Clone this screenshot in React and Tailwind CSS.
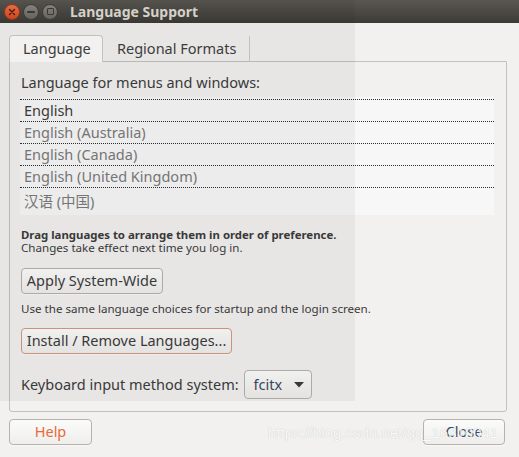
import React from "react";

const langs = [
  { name: "English", dark: true },
  { name: "English (Australia)" },
  { name: "English (Canada)" },
  { name: "English (United Kingdom)" },
];

function Btn({ children, className = "", textClass = "" }) {
  return (
    <div
      className={
        "flex items-center justify-center h-[26px] rounded-[4px] border bg-gradient-to-b from-[#fbfbfa] to-[#efeeec] shadow-[0_1px_0_rgba(255,255,255,0.6)] " +
        className
      }
    >
      <span className={"text-[14.5px] " + textClass}>{children}</span>
    </div>
  );
}

export default function App() {
  return (
    <div
      className="relative w-[519px] h-[457px] overflow-hidden bg-[#f2f1f0] text-[#3c3c3c]"
      style={{ fontFamily: '"Noto Sans", "Noto Sans CJK SC", sans-serif' }}
    >
      {/* Title bar */}
      <div className="h-[23px] flex items-center bg-gradient-to-b from-[#5a5751] to-[#3c3b37]">
        <div className="flex items-center gap-[3px] pl-[4px]">
          <div className="w-[16px] h-[16px] rounded-full bg-gradient-to-b from-[#f0734a] to-[#d9481f] border border-[#a83a1a] flex items-center justify-center">
            <svg width="8" height="8" viewBox="0 0 8 8">
              <path d="M1.5 1.5 L6.5 6.5 M6.5 1.5 L1.5 6.5" stroke="#4a1a0c" strokeWidth="1.3" strokeLinecap="round" />
            </svg>
          </div>
          <div className="w-[16px] h-[16px] rounded-full bg-gradient-to-b from-[#8a8782] to-[#6b6964] border border-[#403f3b] flex items-center justify-center">
            <div className="w-[8px] h-[2px] bg-[#3c3b37] rounded-sm" />
          </div>
          <div className="w-[16px] h-[16px] rounded-full bg-gradient-to-b from-[#8a8782] to-[#6b6964] border border-[#403f3b] flex items-center justify-center">
            <div className="w-[7px] h-[7px] border-[1.5px] border-[#3c3b37] rounded-[1px]" />
          </div>
        </div>
        <div className="ml-[12px] text-[14px] font-bold text-[#dfdbd2] leading-none">Language Support</div>
      </div>

      {/* Notebook */}
      <div className="px-[9px] pt-[12px] w-[507px] box-content">
        <div className="flex items-end h-[27px] relative z-10">
          <div className="h-[27px] w-[94px] border border-b-0 border-[#c3c1bd] rounded-t-[4px] bg-[#f2f1f0] flex items-center pl-[13px] text-[14.5px]">
            Language
          </div>
          <div className="h-[25px] w-[147px] border-r border-[#c3c1bd] flex items-center pl-[14px] text-[14.5px] mb-[1px]">
            Regional Formats
          </div>
        </div>
        <div className="-mt-[1px] border border-[#c3c1bd] rounded-b-[3px] w-[498px] h-[351px] pl-[10px] pr-[12px] pt-[10px] flex flex-col">
          <div className="text-[14.5px] leading-[20px] pl-[1px]">Language for menus and windows:</div>
          <div className="mt-[5px] bg-[#f7f7f7] pt-[2px] h-[118px]">
            {langs.map((l) => (
              <div
                key={l.name}
                className={
                  "border-t border-dotted border-[#2e2e2e] h-[22px] flex items-center pl-[4px] text-[14.5px] " +
                  (l.dark ? "text-[#3c3c3c]" : "text-[#7b7b7b]")
                }
              >
                {l.name}
              </div>
            ))}
            <div className="border-t border-dotted border-[#2e2e2e] h-[27px] flex items-start pt-[3px] pl-[4px] text-[14.5px] text-[#7b7b7b] leading-[20px]">
              汉语 (中国)
            </div>
          </div>
          <div className="mt-[13px] text-[11.6px] leading-[13px] pl-[1px]">
            <div className="font-bold text-[11.4px]">Drag languages to arrange them in order of preference.</div>
            <div>Changes take effect next time you log in.</div>
          </div>
          <Btn className="mt-[14px] w-[142px] ml-[1px] border-[#b6b3ae]">Apply System-Wide</Btn>
          <div className="mt-[8px] text-[11.6px] leading-[14px] pl-[1px]">
            Use the same language choices for startup and the login screen.
          </div>
          <Btn className="mt-[12px] w-[211px] ml-[1px] border-[#d39a84]">Install / Remove Languages...</Btn>
          <div className="mt-[16px] flex items-center pl-[1px]">
            <span className="text-[14.5px]">Keyboard input method system:</span>
            <div className="ml-[5px] h-[29px] w-[68px] rounded-[4px] border border-[#b6b3ae] bg-gradient-to-b from-[#fbfbfa] to-[#efeeec] flex items-center pl-[9px]">
              <span className="text-[14.5px] text-[#3b4a60]">fcitx</span>
              <svg className="ml-[12px]" width="10" height="6" viewBox="0 0 10 6">
                <path d="M0 0 L10 0 L5 5.5 Z" fill="#3c3c3c" />
              </svg>
            </div>
          </div>
        </div>
      </div>

      {/* Bottom buttons */}
      <div className="mt-[7px] px-[9px] flex justify-between w-[514px]">
        <Btn className="w-[83px] border-[#b6b3ae]" textClass="text-[#e86a3a]">Help</Btn>
        <Btn className="w-[82px] border-[#b6b3ae]" textClass="text-[#3b4a60]">Close</Btn>
      </div>

      {/* Selection overlay */}
      <div className="absolute left-0 top-0 w-[355px] h-[401px] bg-black/[0.045] pointer-events-none" />

      {/* Watermark */}
      <div
        className="absolute left-[268px] top-[423px] text-[15px] leading-[20px] text-white/90 pointer-events-none"
        style={{ fontFamily: '"Liberation Sans", sans-serif', textShadow: "0 0 1px rgba(0,0,0,0.25)" }}
      >
        https://blog.csdn.net/qq_16310041
      </div>
    </div>
  );
}
